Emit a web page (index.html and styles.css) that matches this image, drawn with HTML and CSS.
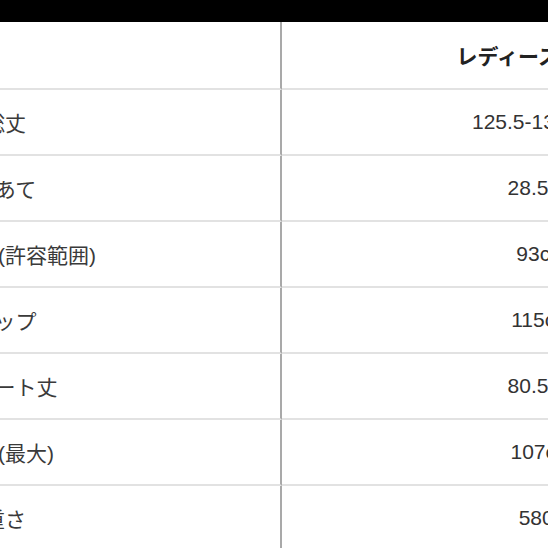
FILE: index.html
```html
<!DOCTYPE html>
<html lang="ja">
<head>
<meta charset="utf-8">
<title>サイズ表</title>
<link rel="stylesheet" href="styles.css">
</head>
<body>
<div class="topbar"></div>
<div class="size-table">
  <div class="cell label head"></div>
  <div class="cell value head">レディースサイズ</div>

  <div class="cell label">総丈</div>
  <div class="cell value">125.5-135.5cm</div>

  <div class="cell label">肩あて</div>
  <div class="cell value">28.5cm</div>

  <div class="cell label">ウエスト(許容範囲)</div>
  <div class="cell value">93cm</div>

  <div class="cell label">ヒップ</div>
  <div class="cell value">115cm</div>

  <div class="cell label">スカート丈</div>
  <div class="cell value">80.5cm</div>

  <div class="cell label">胴囲(最大)</div>
  <div class="cell value">107cm</div>

  <div class="cell label">重さ</div>
  <div class="cell value">580g</div>
</div>
</body>
</html>
```
FILE: styles.css
```css
html, body {
  margin: 0;
  padding: 0;
  overflow: hidden;
  background: #ffffff;
}

body {
  font-family: "Liberation Sans", "Noto Sans CJK JP", sans-serif;
  font-size: 21px;
  color: #333333;
}

.topbar {
  height: 22px;
  background: #000000;
}

.size-table {
  display: grid;
  grid-template-columns: 552px 520px;
  grid-template-rows: 68px;
  grid-auto-rows: 66px;
  margin-left: -270px;
  width: 1072px;
}

.cell {
  box-sizing: border-box;
  display: flex;
  align-items: center;
  justify-content: center;
  white-space: nowrap;
  border-bottom: 2px solid #e2e2e2;
}

.label {
  border-right: 2px solid #a9a9a9;
  color: #3a3a3a;
}

.value.head {
  padding-right: 6px;
  font-size: 21px;
  font-weight: bold;
  color: #222222;
}
```
